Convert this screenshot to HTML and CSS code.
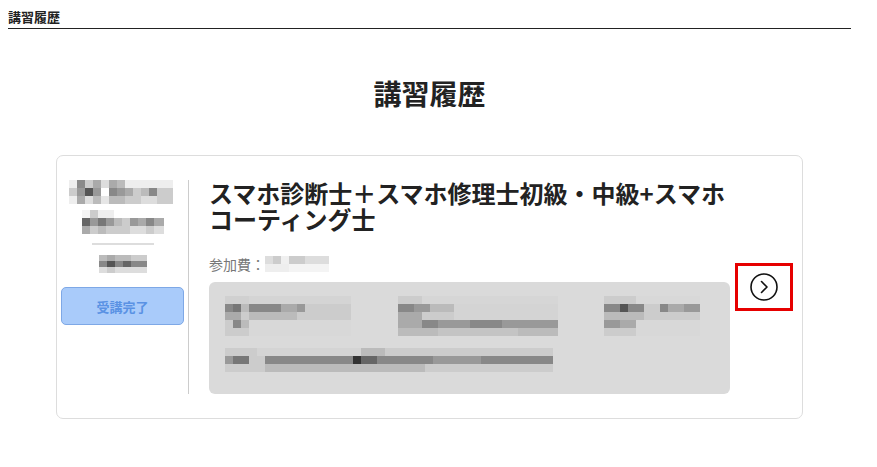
FILE: index.html
```html
<!DOCTYPE html>
<html lang="ja">
<head>
    <meta charset="UTF-8">
    <meta name="viewport" content="width=device-width, initial-scale=1.0">
    <title>講習履歴</title>
    <link rel="stylesheet" href="styles.css">
</head>
<body>
    <div class="page">
        <div class="page-head">講習履歴</div>

        <h1 class="page-title">講習履歴</h1>

        <div class="history-card">
            <div class="card-side">
                <div class="blur blur-name1"></div>
                <div class="blur blur-name2"></div>
                <div class="side-rule"></div>
                <div class="blur blur-date"></div>
                <button class="status-btn" type="button">受講完了</button>
            </div>

            <div class="card-main">
                <h2 class="course-title">スマホ診断士＋スマホ修理士初級・中級+スマホコーティング士</h2>
                <div class="fee">参加費：<span class="blur blur-fee"></span></div>
                <div class="detail-box">
                    <div class="detail-row">
                        <div class="blur blur-d1"></div>
                        <div class="blur blur-d2"></div>
                        <div class="blur blur-d3"></div>
                    </div>
                    <div class="blur blur-d4"></div>
                </div>
            </div>

            <div class="card-action">
                <a class="more-link" href="#">
                    <svg width="30" height="30" viewBox="0 0 30 30" fill="none" stroke="#111" stroke-width="1.6">
                        <circle cx="15" cy="15" r="13"/>
                        <path d="M12.5 9.5 L18 15 L12.5 20.5" stroke-linecap="round" stroke-linejoin="round"/>
                    </svg>
                </a>
            </div>
        </div>
    </div>
</body>
</html>
```

FILE: styles.css
```css
body {
    margin: 8px;
    font-family: "Noto Sans CJK JP", "Noto Sans", sans-serif;
    color: #222;
    background: #fff;
}

.page {
    width: 843px;
}

.page-head {
    font-size: 13px;
    font-weight: 700;
    line-height: 18px;
    padding-bottom: 2px;
    border-bottom: 1px solid #222;
}

.page-title {
    margin: 46px 0 44px;
    text-align: center;
    font-size: 28px;
    font-weight: 700;
    line-height: 36px;
    color: #222;
}

/* card */
.history-card {
    width: 747px;
    height: 264px;
    box-sizing: border-box;
    margin: 0 auto;
    border: 1px solid #ddd;
    border-radius: 7px;
    display: flex;
    padding: 24px 0 24px 4px;
}

.card-side {
    width: 123px;
    padding-right: 4px;
    border-right: 1px solid #ccc;
    display: flex;
    flex-direction: column;
    align-items: center;
}

.side-rule {
    width: 62px;
    height: 2px;
    background: #ddd;
    margin: 9px 0 10px;
}

.status-btn {
    margin-top: 14px;
    width: 123px;
    height: 38px;
    box-sizing: border-box;
    border: 1px solid #7ea8e6;
    border-radius: 5px;
    background: #a9cbfa;
    color: #5a92e4;
    font-family: inherit;
    font-size: 13px;
    font-weight: 700;
}

.card-main {
    width: 521px;
    padding-left: 20px;
}

.course-title {
    margin: 0;
    font-size: 24px;
    font-weight: 700;
    line-height: 26px;
    color: #222;
    width: 521px;
}

.fee {
    margin-top: 22px;
    font-size: 14px;
    line-height: 20px;
    color: #777;
    display: flex;
    align-items: center;
}

.detail-box {
    margin-top: 8px;
    height: 112px;
    box-sizing: border-box;
    background: #dadada;
    border-radius: 6px;
    padding: 14px 16px;
}

.detail-row {
    display: flex;
    justify-content: space-between;
    padding-right: 14px;
}

.card-action {
    padding: 83px 0 0 5px;
}

.more-link {
    display: flex;
    align-items: center;
    justify-content: center;
    width: 52px;
    height: 42px;
    border: 3px solid #e60000;
}

/* pixelated placeholders */
.blur {
    background-repeat: no-repeat;
    background-size: 100% 8px;
}

.blur-name1 {
    width: 104px;
    height: 24px;
    margin-left: -4px;
    background-image:
        linear-gradient(90deg, #eee 0 8px, #8a8a8a 8px 16px, #ccc 16px 24px, #aaa 24px 32px, #ddd 32px 40px, #aaa 40px 48px, #bbb 48px 56px, #eee 56px 104px),
        linear-gradient(90deg, #ccc 0 8px, #999 8px 16px, #555 16px 24px, #999 24px 32px, #fff 32px 40px, #888 40px 48px, #999 48px 56px, #aaa 56px 64px, #ccc 64px 72px, #bbb 72px 80px, #888 80px 88px, #ccc 88px 104px),
        linear-gradient(90deg, #eee 0 8px, #aaa 8px 16px, #ddd 16px 24px, #bbb 24px 32px, #e6e6e6 32px 40px, #bbb 40px 56px, #ccc 56px 72px, #ddd 72px 88px, #ccc 88px 104px);
    background-position: 0 0, 0 8px, 0 16px;
}

.blur-name2 {
    width: 82px;
    height: 24px;
    margin-top: 6px;
    background-image:
        linear-gradient(90deg, #f4f4f4 0 8px, #ccc 8px 16px, #eee 16px 32px, #fff 32px 82px),
        linear-gradient(90deg, #666 0 8px, #999 8px 16px, #777 16px 24px, #999 24px 32px, #bbb 32px 40px, #ccc 40px 48px, #999 48px 56px, #aaa 56px 64px, #888 64px 72px, #aaa 72px 82px),
        linear-gradient(90deg, #aaa 0 8px, #ccc 8px 16px, #bbb 16px 24px, #ccc 24px 48px, #ddd 48px 64px, #ccc 64px 72px, #ddd 72px 82px);
    background-position: 0 0, 0 8px, 0 16px;
}

.blur-date {
    width: 48px;
    height: 18px;
    background-size: 100% 6px;
    background-image:
        linear-gradient(90deg, #bbb 0 8px, #aaa 8px 16px, #bbb 16px 32px, #ccc 32px 48px),
        linear-gradient(90deg, #888 0 8px, #555 8px 16px, #888 16px 24px, #666 24px 32px, #888 32px 48px),
        linear-gradient(90deg, #ddd 0 8px, #ccc 8px 16px, #ddd 16px 48px);
    background-position: 0 0, 0 6px, 0 12px;
}

.blur-fee {
    display: inline-block;
    width: 64px;
    height: 16px;
    background-size: 100% 8px;
    background-image:
        linear-gradient(90deg, #ddd 0 8px, #ccc 8px 16px, #f0f0f0 16px 24px, #ccc 24px 40px, #ddd 40px 64px),
        linear-gradient(90deg, #eee 0 24px, #f4f4f4 24px 64px);
    background-position: 0 0, 0 8px;
}

.blur-d1 {
    width: 126px;
    height: 48px;
    background-image:
        linear-gradient(90deg, #d0d0d0 0 24px, #d4d4d4 24px 126px),
        linear-gradient(90deg, #888 0 8px, #777 8px 16px, #bbb 16px 24px, #888 24px 56px, #aaa 56px 72px, #999 72px 80px, #ccc 80px 126px),
        linear-gradient(90deg, #aaa 0 16px, #ccc 16px 24px, #bbb 24px 72px, #ccc 72px 126px),
        linear-gradient(90deg, #ccc 0 8px, #888 8px 16px, #bbb 16px 24px, #d8d8d8 24px 126px),
        linear-gradient(90deg, #ccc 0 24px, #d8d8d8 24px 126px);
    background-position: 0 0, 0 8px, 0 16px, 0 24px, 0 32px;
}

.blur-d2 {
    width: 160px;
    height: 48px;
    background-image:
        linear-gradient(90deg, #ccc 0 24px, #d6d6d6 24px 160px),
        linear-gradient(90deg, #888 0 16px, #999 16px 32px, #bbb 32px 56px, #d4d4d4 56px 160px),
        linear-gradient(90deg, #aaa 0 24px, #ccc 24px 56px, #d4d4d4 56px 160px),
        linear-gradient(90deg, #aaa 0 24px, #888 24px 40px, #999 40px 72px, #888 72px 104px, #999 104px 160px),
        linear-gradient(90deg, #bbb 0 40px, #c4c4c4 40px 120px, #bbb 120px 160px);
    background-position: 0 0, 0 8px, 0 16px, 0 24px, 0 32px;
}

.blur-d3 {
    width: 96px;
    height: 48px;
    background-image:
        linear-gradient(90deg, #ccc 0 32px, #d8d8d8 32px 96px),
        linear-gradient(90deg, #888 0 16px, #555 16px 24px, #888 24px 40px, #ccc 40px 56px, #888 56px 64px, #aaa 64px 80px, #999 80px 96px),
        linear-gradient(90deg, #bbb 0 40px, #ccc 40px 96px),
        linear-gradient(90deg, #999 0 16px, #aaa 16px 32px, #d8d8d8 32px 96px),
        linear-gradient(90deg, #ccc 0 32px, #d8d8d8 32px 96px);
    background-position: 0 0, 0 8px, 0 16px, 0 24px, 0 32px;
}

.blur-d4 {
    margin-top: 4px;
    width: 328px;
    height: 24px;
    background-image:
        linear-gradient(90deg, #ccc 0 32px, #d4d4d4 32px 136px, #bbb 136px 160px, #ccc 160px 328px),
        linear-gradient(90deg, #999 0 8px, #777 8px 24px, #ccc 24px 40px, #888 40px 128px, #333 128px 136px, #666 136px 152px, #888 152px 208px, #999 208px 256px, #888 256px 328px),
        linear-gradient(90deg, #ccc 0 40px, #bbb 40px 200px, #ccc 200px 328px);
    background-position: 0 0, 0 8px, 0 16px;
}
```
